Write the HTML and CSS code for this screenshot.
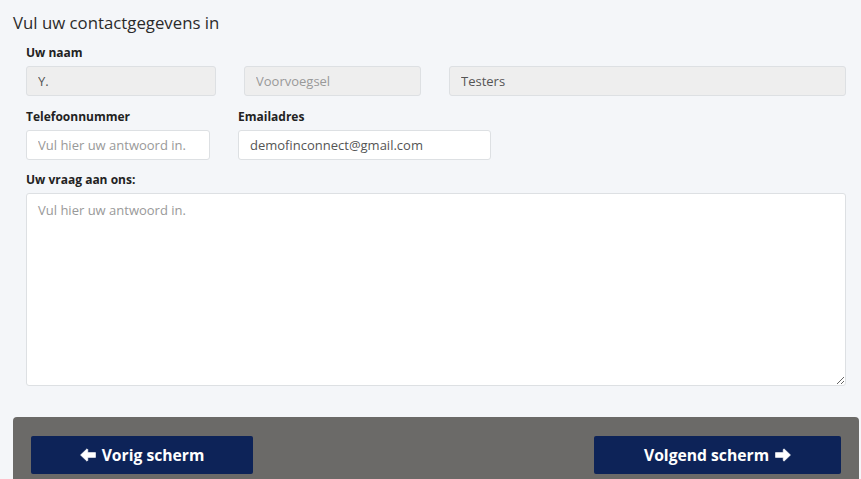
FILE: index.html
```html
<!DOCTYPE html>
<html lang="nl">
<head>
  <meta charset="UTF-8">
  <meta name="viewport" content="width=device-width, initial-scale=1.0">
  <title>Contactgegevens</title>
  <link rel="stylesheet" href="styles.css">
</head>
<body>
  <div class="page">
    <h2 class="title">Vul uw contactgegevens in</h2>

    <form class="contact-form">
      <!-- Naam -->
      <div class="field">
        <label class="label">Uw naam</label>
        <div class="name-row">
          <input class="input" type="text" value="Y." disabled>
          <input class="input" type="text" placeholder="Voorvoegsel" disabled>
          <input class="input" type="text" value="Testers" disabled>
        </div>
      </div>

      <!-- Telefoon en email -->
      <div class="contact-row">
        <div class="field">
          <label class="label">Telefoonnummer</label>
          <input class="input" type="text" placeholder="Vul hier uw antwoord in.">
        </div>
        <div class="field">
          <label class="label">Emailadres</label>
          <input class="input" type="text" value="demofinconnect@gmail.com">
        </div>
      </div>

      <!-- Vraag -->
      <div class="field">
        <label class="label">Uw vraag aan ons:</label>
        <textarea class="input textarea" placeholder="Vul hier uw antwoord in."></textarea>
      </div>
    </form>

    <div class="nav-bar">
      <button class="nav-button" type="button">
        <svg class="arrow" viewBox="0 0 16 14" width="16" height="14"><path d="M0.5 7 L7 0.8 L7.8 1.6 L7.8 4.6 L15.5 4.6 L15.5 9.4 L7.8 9.4 L7.8 12.4 L7 13.2 Z" fill="#fff" stroke="#fff" stroke-width="0.6" stroke-linejoin="round"/></svg>
        Vorig scherm
      </button>
      <button class="nav-button" type="button">
        Volgend scherm
        <svg class="arrow" viewBox="0 0 16 14" width="16" height="14"><path d="M15.5 7 L9 0.8 L8.2 1.6 L8.2 4.6 L0.5 4.6 L0.5 9.4 L8.2 9.4 L8.2 12.4 L9 13.2 Z" fill="#fff" stroke="#fff" stroke-width="0.6" stroke-linejoin="round"/></svg>
      </button>
    </div>
  </div>
</body>
</html>
```

FILE: styles.css
```css
body {
  margin: 0;
  padding: 0;
  background: #f4f6f9;
  font-family: 'Open Sans', 'Liberation Sans', sans-serif;
  color: #333;
  overflow: hidden;
}
.page {
  margin-left: 13px;
  width: 846px;
}
.title {
  font-size: 16.8px;
  font-weight: 400;
  line-height: 20px;
  margin: 13px 0 12px;
  color: #2b2b2b;
}
.contact-form {
  padding: 0 13px;
}
.field {
  display: flex;
  flex-direction: column;
}
.label {
  font-size: 12px;
  font-weight: 700;
  line-height: 16px;
  color: #222;
  margin-bottom: 5px;
}
.name-row {
  display: grid;
  grid-template-columns: 190px 177px 1fr;
  gap: 28px;
  margin-bottom: 13px;
}
.contact-row {
  display: grid;
  grid-template-columns: 184px 253px;
  gap: 28px;
  margin-bottom: 12px;
}
.input {
  box-sizing: border-box;
  height: 30px;
  padding: 0 11px;
  font-family: inherit;
  font-size: 13px;
  color: #555;
  background: #fff;
  border: 1px solid #dde0e3;
  border-radius: 3px;
  outline: none;
}
.input:disabled {
  background: #eeeeee;
  color: #555;
}
.input::placeholder {
  color: #999;
}
.textarea {
  height: 193px;
  padding: 7px 11px;
  resize: vertical;
}
.nav-bar {
  display: flex;
  justify-content: space-between;
  margin-top: 31px;
  padding: 19px 18px 20px;
  background: #6b6a68;
  border-radius: 4px;
}
.nav-button {
  display: flex;
  align-items: center;
  justify-content: center;
  gap: 6px;
  height: 38px;
  background: #0d2358;
  color: #fff;
  border: none;
  border-radius: 2px;
  font-family: inherit;
  font-size: 15.7px;
  font-weight: 700;
  cursor: pointer;
}
.nav-button:first-child {
  width: 222px;
}
.nav-button:last-child {
  width: 247px;
}
```
